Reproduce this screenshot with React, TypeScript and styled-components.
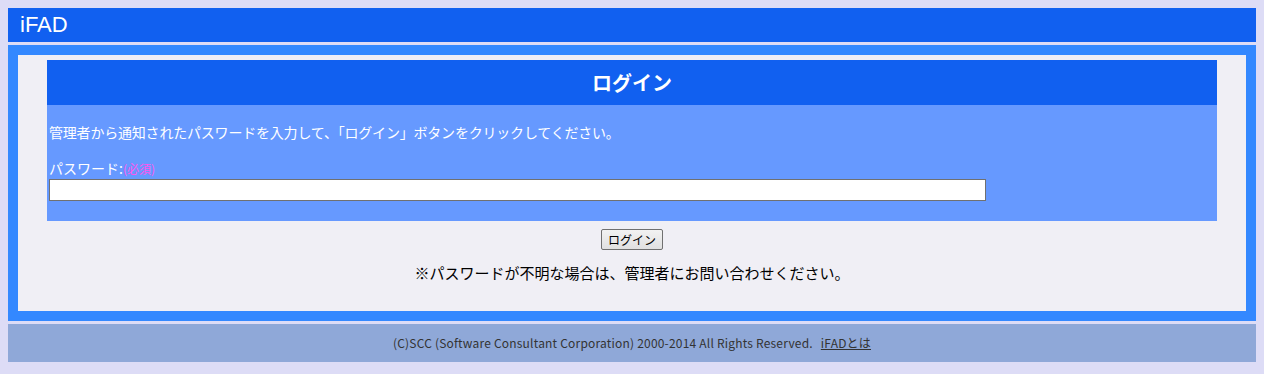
import React, { useState } from "react";
import styled, { createGlobalStyle } from "styled-components";

const GlobalStyle = createGlobalStyle`
  body {
    margin: 8px;
    background-color: #dddcf6;
    font-family: "Noto Sans CJK JP", "Liberation Sans", sans-serif;
  }
`;

const SiteHeader = styled.div`
  height: 34px;
  padding-left: 12px;
  background-color: #1160f0;
  color: #ffffff;
  font-family: "Liberation Sans", Arial, sans-serif;
  font-size: 22px;
  line-height: 34px;
`;

const Frame = styled.div`
  margin-top: 3px;
  padding: 5px 0 28px;
  border: 10px solid #3388ff;
  background-color: #f0eff5;
`;

const Panel = styled.div`
  width: 1170px;
  margin: 0 auto;
`;

const PanelTitle = styled.div`
  height: 45px;
  background-color: #1160f0;
  color: #ffffff;
  font-size: 20px;
  font-weight: bold;
  line-height: 45px;
  text-align: center;
`;

const PanelBody = styled.div`
  padding: 17px 2px 20px;
  background-color: #6699ff;
  color: #ffffff;
  font-size: 14px;
`;

const Message = styled.p`
  margin: 0;
  line-height: 20px;
  letter-spacing: -0.2px;
`;

const Label = styled.label`
  display: block;
  margin-top: 18px;
  line-height: 16px;
`;

const Required = styled.span`
  color: #ff55ee;
  font-size: 12px;
`;

const PasswordInput = styled.input`
  display: block;
  box-sizing: border-box;
  width: 937px;
  height: 22px;
  margin: 2px 0 0;
  padding: 1px 3px;
  border: 1px solid #707070;
  background-color: #ffffff;
  font-size: 13px;
  outline: none;
`;

const ButtonRow = styled.div`
  display: flex;
  justify-content: center;
  margin-top: 8px;
`;

const LoginButton = styled.button`
  width: 62px;
  height: 21px;
  padding: 0;
  border: 1px solid #707070;
  border-radius: 2px;
  background: linear-gradient(#f2f2f2, #e0e0e0);
  color: #000000;
  font-family: "Noto Sans CJK JP", sans-serif;
  font-size: 12px;
  line-height: 19px;
  cursor: pointer;
`;

const Note = styled.p`
  margin: 13px 0 0;
  font-size: 15px;
  line-height: 20px;
  text-align: center;
  color: #000000;
`;

const Footer = styled.div`
  margin-top: 3px;
  height: 38px;
  background-color: #8fa8d8;
  color: #333333;
  font-size: 12px;
  letter-spacing: 0.2px;
  line-height: 38px;
  text-align: center;

  a {
    margin-left: 8px;
    color: #333333;
    text-decoration: underline;
  }
`;

const App = () => {
  const [password, setPassword] = useState<string>("");

  return (
    <>
      <GlobalStyle />
      <SiteHeader>iFAD</SiteHeader>
      <Frame>
        <Panel>
          <PanelTitle>ログイン</PanelTitle>
          <PanelBody>
            <Message>
              管理者から通知されたパスワードを入力して、「ログイン」ボタンをクリックしてください。
            </Message>
            <Label htmlFor="password">
              パスワード:<Required>(必須)</Required>
            </Label>
            <PasswordInput
              id="password"
              type="password"
              value={password}
              onChange={e => setPassword(e.target.value)}
            />
          </PanelBody>
          <ButtonRow>
            <LoginButton type="button">ログイン</LoginButton>
          </ButtonRow>
          <Note>※パスワードが不明な場合は、管理者にお問い合わせください。</Note>
        </Panel>
      </Frame>
      <Footer>
        (C)SCC (Software Consultant Corporation) 2000-2014 All Rights Reserved.
        <a href="#">iFADとは</a>
      </Footer>
    </>
  );
};

export default App;
